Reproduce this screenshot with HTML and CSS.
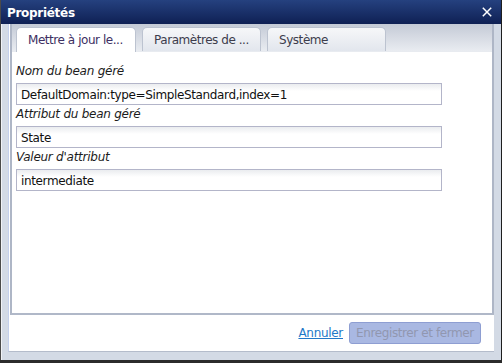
FILE: index.html
```html
<!DOCTYPE html>
<html lang="fr">
<head>
<meta charset="utf-8">
<title>Propriétés</title>
<link rel="stylesheet" href="styles.css">
</head>
<body>
<div class="window">
  <div class="titlebar">
    <span class="title">Propriétés</span>
    <svg class="close" width="10" height="10" viewBox="0 0 10 10"><path d="M0.8 0.8 L9.2 9.2 M9.2 0.8 L0.8 9.2" stroke="#fff" stroke-width="1.5" fill="none"/></svg>
  </div>
  <div class="frame">
    <div class="inner">
      <div class="tabpanel">
        <div class="tabs">
          <div class="tab active">Mettre à jour le...</div>
          <div class="tab">Paramètres de ...</div>
          <div class="tab">Système</div>
        </div>
        <div class="content">
          <label class="lbl">Nom du bean géré</label>
          <div class="input">DefaultDomain:type=SimpleStandard,index=1</div>
          <label class="lbl">Attribut du bean géré</label>
          <div class="input">State</div>
          <label class="lbl">Valeur d'attribut</label>
          <div class="input">intermediate</div>
        </div>
      </div>
      <div class="footer">
        <a class="cancel" href="#">Annuler</a>
        <button class="save" disabled>Enregistrer et fermer</button>
      </div>
    </div>
  </div>
</div>
</body>
</html>
```

FILE: styles.css
```css
html, body {
  margin: 0;
  padding: 0;
  background: #2b2b2b;
}
body {
  width: 502px;
  height: 363px;
  font-family: "DejaVu Sans", Verdana, sans-serif;
  font-size: 12px;
  color: #111;
}
.window {
  width: 500px;
  height: 360px;
  border-left: 1px solid #4a4a4a;
  border-right: 1px solid #1e1e1e;
  display: flex;
  flex-direction: column;
  background: #d3dae5;
}
.titlebar {
  height: 24px;
  flex: none;
  background: linear-gradient(#25417f, #0f2054);
  display: flex;
  align-items: center;
  justify-content: space-between;
  padding: 0 9px 0 6px;
}
.title {
  color: #fff;
  font-weight: bold;
  font-size: 12px;
  letter-spacing: -0.3px;
  padding-top: 1px;
}
.close {
  display: block;
}
.frame {
  flex: 1;
  padding: 0 7px 8px 6px;
  display: flex;
  flex-direction: column;
  border-left: 1px solid #f0f2f6;
}
.inner {
  flex: 1;
  display: flex;
  flex-direction: column;
  background: #fff;
  border-left: 1px solid #c4d0ec;
  border-bottom: 1px solid #b4bccb;
}
.tabpanel {
  flex: 1;
  display: flex;
  flex-direction: column;
  margin-left: 1px;
  border-left: 2px solid #aeb6c6;
  border-right: 2px solid #aeb6c6;
  border-bottom: 2px solid #b0b8c8;
}
.tabs {
  height: 28px;
  flex: none;
  box-sizing: border-box;
  background: linear-gradient(#c4cad6, #e9ecf1);
  display: flex;
  align-items: flex-end;
  padding-left: 4px;
  gap: 6px;
  border-bottom: 1px solid #e8ebf0;
}
.tab {
  box-sizing: border-box;
  width: 119px;
  height: 24px;
  border: 1px solid #bcc3d0;
  border-bottom: none;
  border-radius: 5px 5px 0 0;
  background: linear-gradient(#f6f7f9, #e2e6ed);
  color: #3c3c4c;
  font-size: 12px;
  letter-spacing: -0.45px;
  padding: 5px 0 0 11px;
  white-space: nowrap;
}
.tab.active {
  width: 120px;
  background: #fff;
  color: #3d2f62;
  height: 25px;
  margin-bottom: -1px;
}
.content {
  flex: 1;
  padding: 10px 0 0 4px;
  display: flex;
  flex-direction: column;
}
.lbl {
  display: block;
  font-style: italic;
  font-size: 12px;
  letter-spacing: -0.25px;
  color: #1c1c1c;
  height: 18px;
  line-height: 18px;
  padding-bottom: 3px;
}
.input {
  box-sizing: border-box;
  width: 426px;
  height: 22px;
  border: 1px solid #b3b5c9;
  background: linear-gradient(#eaecef, #fff 7px);
  font-size: 12px;
  letter-spacing: -0.37px;
  line-height: 20px;
  padding: 1px 0 0 4px;
}
.footer {
  height: 36px;
  flex: none;
  display: flex;
  align-items: center;
  justify-content: flex-end;
  gap: 6px;
  padding-right: 13px;
}
.cancel {
  color: #2378c8;
  font-size: 12px;
  letter-spacing: -0.3px;
  text-decoration: underline;
}
.save {
  box-sizing: border-box;
  height: 22px;
  width: 132px;
  border: 1px solid #8e9ed2;
  border-radius: 3px;
  background: #a9b8e2;
  color: #9197b0;
  font-family: "DejaVu Sans", Verdana, sans-serif;
  font-size: 12px;
  letter-spacing: -0.4px;
  padding: 0;
}
```
